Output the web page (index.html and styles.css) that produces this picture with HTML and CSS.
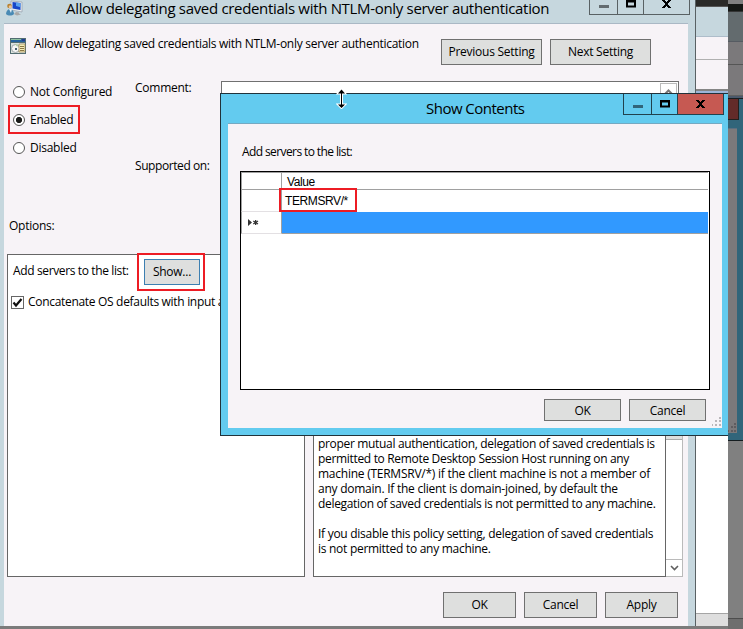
FILE: index.html
```html
<!DOCTYPE html>
<html lang="en">
<head>
<meta charset="utf-8">
<title>Allow delegating saved credentials with NTLM-only server authentication</title>
<link rel="stylesheet" href="styles.css">
</head>
<body>
<div class="desktop">
  <div class="back-window">
    <div class="back-dark"></div>
    <div class="back-title"></div>
    <div class="back-menu"></div>
    <div class="back-tools"></div>
    <div class="back-edge"></div>
    <div class="back-body"></div>
    <div class="back-status"></div>
  </div>
  <div class="shade">
    <div class="shade-gap"></div>
    <div class="shade-dark"></div>
    <div class="shade-title"></div>
    <div class="shade-menu"></div>
    <div class="shade-tools"></div>
    <div class="shade-edge"></div>
    <div class="shade-dialog">
      <div class="shade-close"></div>
      <div class="shade-client">
        <svg class="grip" width="9" height="9"><path d="M6 0h2v2h-2zM6 3h2v2h-2zM3 3h2v2h-2zM6 7h2v2h-2zM3 7h2v2h-2zM0 7h1v2h-1z" fill="#5f5c5f"/></svg>
      </div>
    </div>
    <div class="shade-rest"></div>
    <div class="shade-bottom"></div>
  </div>

  <main class="window">
    <header class="titlebar">
      <svg class="app-icon" width="17" height="17" viewBox="0 0 17 17">
        <path d="M5 1l11 1v10L5 10z" fill="#e8ecf0" stroke="#8996a2" stroke-width=".6"/>
        <path d="M6.500 2l8 1v7L6.500 8.600z" fill="#1646c8"/><path d="M10 2.600l4.500.6v4L10 6z" fill="#57a0ee"/>
        <path d="M10 12l3 .5v1l2 1-4 1-3-1.500z" fill="#a8a8a8"/>
        <circle cx="3.500" cy="6" r="2.300" fill="#b9822f"/><circle cx="4.200" cy="6.800" r="1.500" fill="#eac49a"/>
        <path d="M0 14c0-3 2-5 4-5s4 2 4 5c-2 2-6 2-8 0z" fill="#498ab4"/><path d="M3 9h3L5 13z" fill="#e7f0f5"/>
      </svg>
      <h1 class="title main-title">Allow delegating saved credentials with NTLM-only server authentication</h1>
      <div class="controls main-controls">
        <span class="ctl ctl-min"><svg width="10" height="3"><path d="M0 0h10v3H0z" fill="#636b6f"/></svg></span>
        <span class="ctl ctl-max"><svg width="10" height="8"><path d="M1 1.500h8v5H1z" fill="none" stroke="#000" stroke-width="2"/><path d="M0 0h10v2H0z"/></svg></span>
        <span class="ctl ctl-close"><svg width="9" height="8"><path d="M0 0h3v1h1v1h1V1h1V0h3v1H8v1H7v1H6v2h1v1h1v1h1v1H6V7H5V6H4v1H3v1H0V7h1V6h1V5h1V3H2V2H1V1H0z"/></svg></span>
      </div>
    </header>
    <section class="client">
      <div class="policy-row">
        <svg class="policy-icon" width="16" height="16" viewBox="0 0 16 16">
          <path d="M0 0h16v16H0z" fill="#536d72"/><path d="M1 1h14v3H1z" fill="#2563a0"/><path d="M1 1h10v1H1z" fill="#8fc3a1"/><path d="M12 1h3v2h-3z" fill="#263d91"/>
          <path d="M1 5h14v10H1z" fill="#dce2df"/><circle cx="5.500" cy="10.500" r="4" fill="#f6f6f6" stroke="#a0a8aa"/><path d="M5 10h2v2H5z" fill="#485f6e"/><path d="M5.500 7l2-1v3z" fill="#b5d89a"/>
          <path d="M9 6h6v8H9z" fill="#f5edb9" stroke="#99834f" stroke-width=".7"/><path d="M10 8h4v1h-4zM10 10h4v1h-4zM10 12h4v1h-4z" fill="#8b7745"/>
        </svg>
        <span class="label policy-name">Allow delegating saved credentials with NTLM-only server authentication</span>
        <div class="nav-buttons">
          <button class="btn nav-btn prev">Previous Setting</button>
          <button class="btn nav-btn next">Next Setting</button>
        </div>
      </div>
      <div class="state-row">
        <div class="states">
          <label class="state"><i class="radio"></i><span class="label notconf">Not Configured</span></label>
          <label class="state marked"><i class="radio on"></i><span class="label">Enabled</span></label>
          <label class="state"><i class="radio"></i><span class="label">Disabled</span></label>
        </div>
        <div class="captions">
          <span class="label comment">Comment:</span>
          <span class="label supported">Supported on:</span>
        </div>
        <div class="comment-box"><span class="scroll-up"><svg width="9" height="6"><path d="M1 5l3.500-3.500L8 5" fill="none" stroke="#777" stroke-width="2"/></svg></span></div>
      </div>
      <span class="label options-label">Options:</span>
      <div class="panels">
        <div class="panel options">
          <div class="show-row">
            <span class="label list-label">Add servers to the list:</span>
            <span class="show-mark"><button class="btn show-btn">Show...</button></span>
          </div>
          <label class="check-row">
            <span class="checkbox"><svg width="11" height="11"><path d="M1.500 5.500L4 8.500L9.500 2" fill="none" stroke="#111" stroke-width="2.200"/></svg></span>
            <span class="label concat">Concatenate OS defaults with input above</span>
          </label>
        </div>
        <div class="panel help">
          <div class="help-text">
            <p class="label tight">proper mutual authentication, delegation of saved credentials is</p>
            <p class="label tight">permitted to Remote Desktop Session Host running on any</p>
            <p class="label">machine (TERMSRV/*) if the client machine is not a member of</p>
            <p class="label">any domain. If the client is domain-joined, by default the</p>
            <p class="label tight">delegation of saved credentials is not permitted to any machine.</p>
            <p class="label blank"></p>
            <p class="label mid">If you disable this policy setting, delegation of saved credentials</p>
            <p class="label mid">is not permitted to any machine.</p>
          </div>
          <div class="scrollbar"><span class="thumb"></span><span class="scroll-down"><svg width="9" height="6"><path d="M1 1l3.500 3.500L8 1" fill="none" stroke="#606060" stroke-width="1.600"/></svg></span></div>
        </div>
      </div>
      <footer class="actions">
        <button class="btn">OK</button><button class="btn">Cancel</button><button class="btn">Apply</button>
      </footer>
    </section>
  </main>

  <section class="dialog">
    <header class="dialog-bar">
      <h2 class="title dialog-title">Show Contents</h2>
      <div class="controls dialog-controls">
        <span class="ctl ctl-min"><svg width="10" height="3"><path d="M0 0h10v3H0z" fill="#31657a"/></svg></span>
        <span class="ctl ctl-max"><svg width="10" height="8"><path d="M1 1.500h8v5H1z" fill="none" stroke="#000" stroke-width="2"/><path d="M0 0h10v2H0z"/></svg></span>
        <span class="ctl ctl-close"><svg width="9" height="8"><path d="M0 0h3v1h1v1h1V1h1V0h3v1H8v1H7v1H6v2h1v1h1v1h1v1H6V7H5V6H4v1H3v1H0V7h1V6h1V5h1V3H2V2H1V1H0z"/></svg></span>
      </div>
    </header>
    <div class="dialog-client">
      <span class="label dialog-label">Add servers to the list:</span>
      <div class="table">
        <div class="tr head"><span class="th"></span><span class="td value">Value</span></div>
        <div class="tr row"><span class="th"></span><span class="td"><span class="value-mark">TERMSRV/*</span></span></div>
        <div class="tr new"><span class="th"><svg width="11" height="7"><path d="M0 0l4 3.500L0 7zM7 1h1.300v5H7z" fill="#333"/><path d="M5.300 2l4.700 3M5.300 5l4.700-3" stroke="#333" stroke-width="1.300"/></svg></span><span class="td"></span></div>
      </div>
      <footer class="dialog-actions"><button class="btn">OK</button><button class="btn">Cancel</button></footer>
      <svg class="grip" width="9" height="9"><path d="M7 0h2v2h-2zM7 3h2v2h-2zM3 3h2v2h-2zM7 7h2v2h-2zM3 7h2v2h-2zM0 7h1v2h-1z" fill="#bab6ba"/></svg>
    </div>
  </section>

  <svg class="cursor" width="11" height="20" viewBox="0 0 11 20"><path d="M5.500 .5L9 4.500H6V15.500H9L5.500 19L2 15.500H5V4.500H2z" fill="#000" stroke="#fff" stroke-width="2" paint-order="stroke"/></svg>
</div>
</body>
</html>
```
FILE: styles.css
```css
* { box-sizing: border-box; }
body { margin: 0; overflow: hidden; font-family: "Open Sans", sans-serif; font-size: 12px; color: #000; }
h1, h2, p { margin: 0; font-weight: 400; }
svg { display: block; flex: none; }
.desktop { position: relative; width: 743px; height: 629px; overflow: hidden; background: #7b7b7b; }
.label { display: block; line-height: 16px; white-space: nowrap; letter-spacing: -0.25px; }
.title { white-space: nowrap; font-size: 15px; line-height: 20px; }

.back-window { position: absolute; left: 696px; top: 0; width: 32px; height: 626px; display: flex; flex-direction: column; }
.back-dark { height: 7px; background: #2a2a28; border-bottom: 1px solid #555; }
.back-title { height: 30px; background: #c6d7de; border-bottom: 1px solid #aebdca; }
.back-menu { height: 23px; background: #f7f3f7; border-bottom: 1px solid #b0b0b0; }
.back-tools { height: 31px; background: #f7f3f7; border-bottom: 2px solid #858585; }
.back-edge { height: 2px; background: #9cb5d8; }
.back-body { flex: 1; background: #fff; }
.back-status { height: 13px; background: #dedede; border-top: 1px solid #a5a5a5; }

.shade { position: absolute; left: 728px; top: 0; width: 15px; height: 629px; display: flex; flex-direction: column; background: #808080; }
.shade-gap { height: 4px; background: #808080; }
.shade-dark { height: 8px; background: #151815; border-bottom: 1px solid #353535; }
.shade-title { height: 30px; background: #636b6e; border-bottom: 1px solid #565b62; }
.shade-menu { height: 23px; background: #7b797b; border-bottom: 1px solid #555; }
.shade-tools { height: 31px; background: #7b797b; border-bottom: 1px solid #606060; }
.shade-edge { height: 2px; background: #4b596b; }
.shade-dialog { height: 343px; background: #31657a; border: solid #151d20; border-width: 1px 0; }
.shade-close { width: 11px; height: 21px; background: #632b29; border: solid #21201f; border-width: 0 1px 1px 0; }
.shade-client { width: 9px; height: 305px; margin-top: 8px; padding-top: 294px; background: #7b797b; border-top: 1px solid #5b6f80; }
.shade-rest { flex: 1; }
.shade-bottom { height: 11px; background: #6e6e6e; border-top: 1px solid #4d4d4d; }

.window { position: absolute; left: 0; top: 0; width: 696px; height: 626px; background: #c6d7de; border-right: 1px solid #596164; }
.titlebar { height: 24px; display: flex; align-items: flex-start; padding-left: 6px; }
.main-title { width: 523px; margin: -2px 0 0 43px; letter-spacing: -0.32px; }
.controls { display: flex; border: 1px solid #596164; border-top: 0; }
.ctl { display: flex; align-items: flex-start; justify-content: center; border-right: 1px solid #596164; }
.ctl:last-child { border-right: 0; }
.ctl-min { width: 28px; } .ctl-max { width: 26px; } .ctl-close { width: 45px; }
.main-controls { width: 101px; height: 15px; }
.main-controls .ctl-min { padding-top: 5px; }
.client { width: 684px; height: 603px; margin: -1px 0 0 4px; background: #f7f3f7; border-top: 1px solid #aab8c5; display: flex; flex-direction: column; }
.policy-row { height: 57px; display: flex; align-items: flex-start; padding: 14px 0 0 6px; }
.policy-name { width: 407px; margin: -2px 0 0 8px; letter-spacing: -0.28px; }
.nav-buttons { display: flex; gap: 8px; margin-top: 1px; }
.btn { width: 73px; height: 26px; padding: 0; border: 1px solid #707070; border-radius: 0; background: #dedfde; color: #000; font: inherit; line-height: 22px; letter-spacing: -0.25px; white-space: nowrap; }
.nav-btn { width: 101px; }
.state-row { height: 136px; display: flex; }
.states { width: 131px; padding: 0 0 0 4px; }
.state { display: flex; align-items: center; gap: 5px; width: 120px; height: 27px; padding-left: 5px; margin-top: -3px; }
.state + .state { margin-top: 0; }
.state.marked { width: 72px; height: 29px; padding-left: 3px; border: 2px solid #ed1c24; }
.radio { width: 12px; height: 12px; border: 1px solid #555; border-radius: 50%; background: #fff; }
.radio.on { background: radial-gradient(circle, #1b1b1b 0 2.800px, #fff 3.300px); }
.captions { width: 86px; display: flex; flex-direction: column; gap: 62px; }
.comment { margin-top: -1px; }
.supported { letter-spacing: -0.42px; }
.comment-box { width: 458px; height: 56px; display: flex; justify-content: flex-end; padding: 1px; background: #fff; border: 1px solid #707070; }
.scroll-up { width: 17px; height: 17px; display: flex; justify-content: center; padding-top: 5px; border: 1px solid #bababa; }
.options-label { height: 16px; margin: 1px 0 20px 5px; }
.panels { display: flex; height: 323px; gap: 8px; padding-left: 3px; }
.panel { background: #fff; border: 1px solid #666; }
.options { width: 298px; }
.show-row { height: 36px; display: flex; padding-left: 5px; }
.list-label { width: 124px; margin-top: 8px; letter-spacing: -0.37px; }
.show-mark { display: block; width: 68px; height: 38px; margin-top: -2px; padding: 4px 5px; border: 2px solid #ed1c24; }
.show-btn { display: block; width: 56px; border-color: #3c7fb1; }
.check-row { display: flex; padding: 3px 0 0 3px; gap: 4px; }
.checkbox { width: 13px; height: 13px; margin-top: 2px; background: #fff; border: 1px solid #666; }
.concat { letter-spacing: -0.31px; }
.help { display: flex; width: 370px; border-right: 0; border-bottom: 0; }
.help-text { width: 352px; border-right: 1px solid #666; border-bottom: 1px solid #666; padding: 181px 0 0 4px; }
.help-text .label { line-height: 15px; height: 15px; }
.help-text .tight { letter-spacing: -0.325px; }
.help-text .mid { letter-spacing: -0.28px; }
.scrollbar { width: 17px; display: flex; flex-direction: column; justify-content: space-between; border: solid #bababa; border-width: 0 1px 1px 0; }
.thumb { height: 185px; background: #dedfde; border-bottom: 1px solid #aaa; }
.scroll-down { height: 17px; display: flex; align-items: center; justify-content: center; border-top: 1px solid #bababa; }
.actions { display: flex; justify-content: flex-end; gap: 8px; padding: 15px 10px 0 0; }

.dialog { position: absolute; left: 220px; top: 93px; width: 508px; height: 343px; background: #63cbef; border: 1px solid #21323a; border-right: 0; }
.dialog-bar { height: 29px; display: flex; padding-left: 205px; }
.dialog-title { width: 197px; margin-top: 4px; letter-spacing: -0.52px; }
.dialog-controls { width: 101px; height: 21px; border-color: #21424e; }
.dialog-controls .ctl { align-items: center; border-color: #21424e; }
.dialog-controls .ctl-min { padding-top: 5px; }
.dialog-controls .ctl-close { background: #c65952; }
.dialog-client { width: 494px; height: 305px; margin-left: 7px; padding: 20px 12px 0; background: #f7f3f7; border-top: 1px solid #75a9c2; position: relative; }
.dialog-label { margin-left: 2px; letter-spacing: -0.6px; }
.table { width: 470px; height: 219px; margin-top: 11px; background: #fff; border: 1px solid #000; padding-right: 1px; font-family: "Liberation Sans", sans-serif; font-size: 12px; letter-spacing: -0.4px; }
.tr { display: flex; }
.th { width: 41px; border: solid #a0a0a0; border-width: 0 1px 0 1px; }
.td { flex: 1; }
.head { height: 18px; border-top: 1px solid #a0a0a0; border-bottom: 1px solid #a0a0a0; }
.value { padding-left: 5px; line-height: 19px; }
.row { height: 22px; }
.row .th, .new .th { border-bottom: 1px solid #e3e0e3; }
.value-mark { display: block; width: 78px; height: 24px; margin: -2px 0 0 -3px; padding-left: 4px; line-height: 22px; border: 2px solid #ed1c24; position: relative; }
.new { height: 22px; }
.new .th { display: flex; align-items: center; padding-left: 6px; }
.new .td { background: #3199ff; border-bottom: 1px solid #a0a0a0; }
.dialog-actions { display: flex; justify-content: flex-end; gap: 8px; padding: 9px 4px 0 0; }
.dialog-actions .btn { width: 77px; height: 22px; line-height: 19px; }
.dialog-client > .grip { position: absolute; right: 1px; bottom: 2px; }
.cursor { position: absolute; left: 336px; top: 89px; }
```
